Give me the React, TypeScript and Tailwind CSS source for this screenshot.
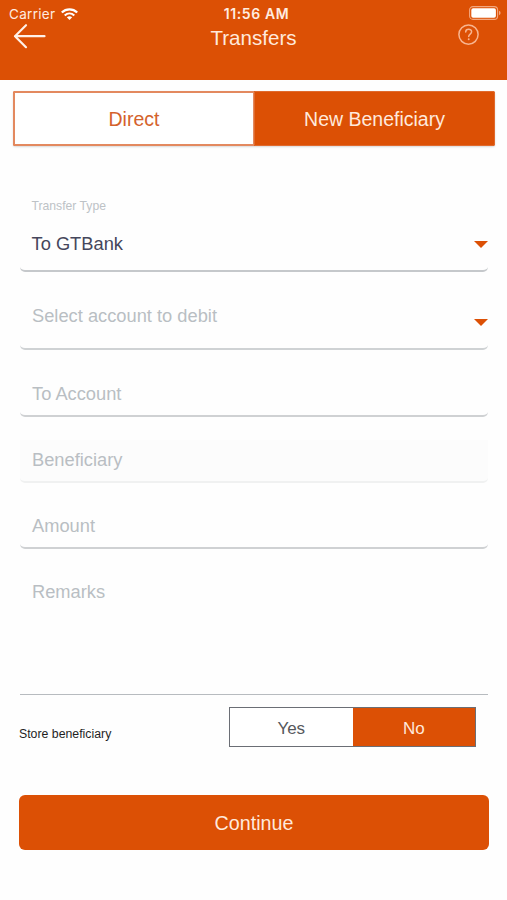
import React from 'react';

interface FieldProps {
  label: string;
  className?: string;
  dropdown?: boolean;
}

function Caret() {
  return (
    <svg className="w-[14px] h-[7px] shrink-0 text-[#dc5005]" fill="currentColor" viewBox="0 0 14 7">
      <path d="M0 0H14L7 7Z" />
    </svg>
  );
}

function Field({ label, className = '', dropdown = false }: FieldProps) {
  return (
    <div className={`flex justify-between rounded-b-[5px] pl-3 text-[18.3px] leading-5 text-[#b9bec3] ${className}`}>
      <span>{label}</span>
      {dropdown && <Caret />}
    </div>
  );
}

function StatusBar() {
  return (
    <div className="flex h-[26px] items-center pl-[9px] pr-[6px] font-[Inter] text-[13.5px] leading-4 text-[#ffece0]">
      <div className="flex flex-1 items-center gap-[6px] pt-[2px]">
        <span className="tracking-[0.3px]">Carrier</span>
        <svg className="w-[17px] h-3" fill="none" stroke="white" viewBox="0 0 17 12">
          <path strokeWidth={2.3} d="M0.8 4.5C5.2 0.3 11.8 0.3 16.2 4.5" />
          <path strokeWidth={2.1} d="M3.7 7.4C6.5 4.8 10.5 4.8 13.3 7.4" />
          <path fill="white" stroke="none" d="M5.8 9.3Q8.5 7 11.2 9.3L8.5 12Z" />
        </svg>
      </div>
      <span className="pt-[2px] text-[14px] font-semibold tracking-[0.6px] mr-[-3px]">11:56 AM</span>
      <div className="flex flex-1 justify-end">
        <svg className="w-8 h-[14px]" fill="none" viewBox="0 0 32 14">
          <rect x="0.6" y="0.6" width="28" height="12.8" rx="3.4" stroke="#f3a77f" strokeWidth={1.1} />
          <rect x="2.3" y="2.3" width="24.6" height="9.4" rx="1.8" fill="white" />
          <path fill="#f3a77f" d="M30 4.8Q31.6 5.4 31.6 7Q31.6 8.6 30 9.2Z" />
        </svg>
      </div>
    </div>
  );
}

function Header() {
  return (
    <header className="h-20 bg-[#dc5005]">
      <StatusBar />
      <div className="grid grid-cols-3 items-start">
        <svg className="ml-[13px] mt-[-3px] w-[33px] h-[26px]" fill="none" stroke="#fff1e8" viewBox="0 0 33 26">
          <path strokeLinecap="round" strokeLinejoin="round" strokeWidth={2.2} d="M13 2.2L2 13.2L13 24.2M2 13.2H31.5" />
        </svg>
        <h1 className="text-center text-[20.6px] leading-6 text-[#ffe9dc]">Transfers</h1>
        <svg className="mr-[27px] mt-[-2px] w-[22px] h-[22px] justify-self-end" fill="none" stroke="#f8b590" viewBox="0 0 22 22">
          <circle cx="10.5" cy="10.6" r="9.6" strokeWidth={1.5} />
          <path strokeLinecap="round" strokeWidth={1.5} d="M7.7 7.9C7.7 4.4 13.6 4.4 13.6 7.8C13.6 10.2 10.7 10 10.7 12.6" />
          <circle cx="10.7" cy="15.3" r="0.95" fill="#f8b590" stroke="none" />
        </svg>
      </div>
    </header>
  );
}

export default function App() {
  return (
    <div className="h-[900px] w-[507px] overflow-hidden bg-[#fefefe] font-['Liberation_Sans',Arial,sans-serif]">
      <Header />

      <div className="ml-[13px] mt-[11px] grid h-[55px] w-[482px] grid-cols-2 rounded-[2px] bg-[#dc5005] text-[19.5px] shadow-[0_1px_2px_rgba(0,0,0,0.15)]">
        <button className="rounded-l-[2px] border-2 border-r border-[#e3895f] bg-white pt-[2px] text-[#d4622c]">Direct</button>
        <button className="rounded-r-[2px] border border-[#e06a2d] bg-[#dc5005] pt-[2px] text-[#ffe9dc]">New Beneficiary</button>
      </div>

      <main className="ml-5 w-[468px]">
        <div className="mt-[50px] h-[76px] rounded-b-[5px] border-b-2 border-[#c5c8cb] pl-3">
          <p className="ml-[-0.5px] pt-[2px] text-[12.2px] leading-4 text-[#bdc2c6]">Transfer Type</p>
          <div className="mt-[20px] flex items-center justify-between text-[18.3px] leading-5 text-[#45465c]">
            <span className="ml-[-0.5px]">To GTBank</span>
            <Caret />
          </div>
        </div>

        <Field label="Select account to debit" dropdown className="mt-[34px] h-[44px] border-b-2 border-[#cfd2d4] [&>svg]:mt-[13px]" />
        <Field label="To Account" className="mt-[34px] h-[33px] border-b-2 border-[#cfd1d3]" />
        <Field label="Beneficiary" className="mt-[23px] h-[43px] border-b-2 border-[#f0f1f1] bg-[#fcfcfc] pt-[10px]" />
        <Field label="Amount" className="mt-[33px] h-[33px] border-b-2 border-[#cfd1d3]" />
        <div className="mt-[33px] h-[113px] border-b border-[#b7bbbf] pl-3 text-[18.3px] leading-5 text-[#b9bec3]">
          Remarks
        </div>

        <div className="mt-[12px] flex h-10 justify-between pr-3">
          <span className="ml-[-1px] pt-[19px] text-[12.3px] leading-4 text-[#1f1f1f]">Store beneficiary</span>
          <div className="grid w-[247px] grid-cols-2 border-[1.5px] border-[#6b6e75] bg-white text-[17px]">
            <button className="pt-[3px] text-[#56585c]">Yes</button>
            <button className="bg-[#dc5005] pt-[3px] text-[#ffe9dc]">No</button>
          </div>
        </div>

        <button className="ml-[-1px] mt-[48px] h-[55px] w-[470px] rounded-[6px] bg-[#dc5005] pt-[2px] text-[19.7px] text-[#ffe9dc]">
          Continue
        </button>
      </main>
    </div>
  );
}
